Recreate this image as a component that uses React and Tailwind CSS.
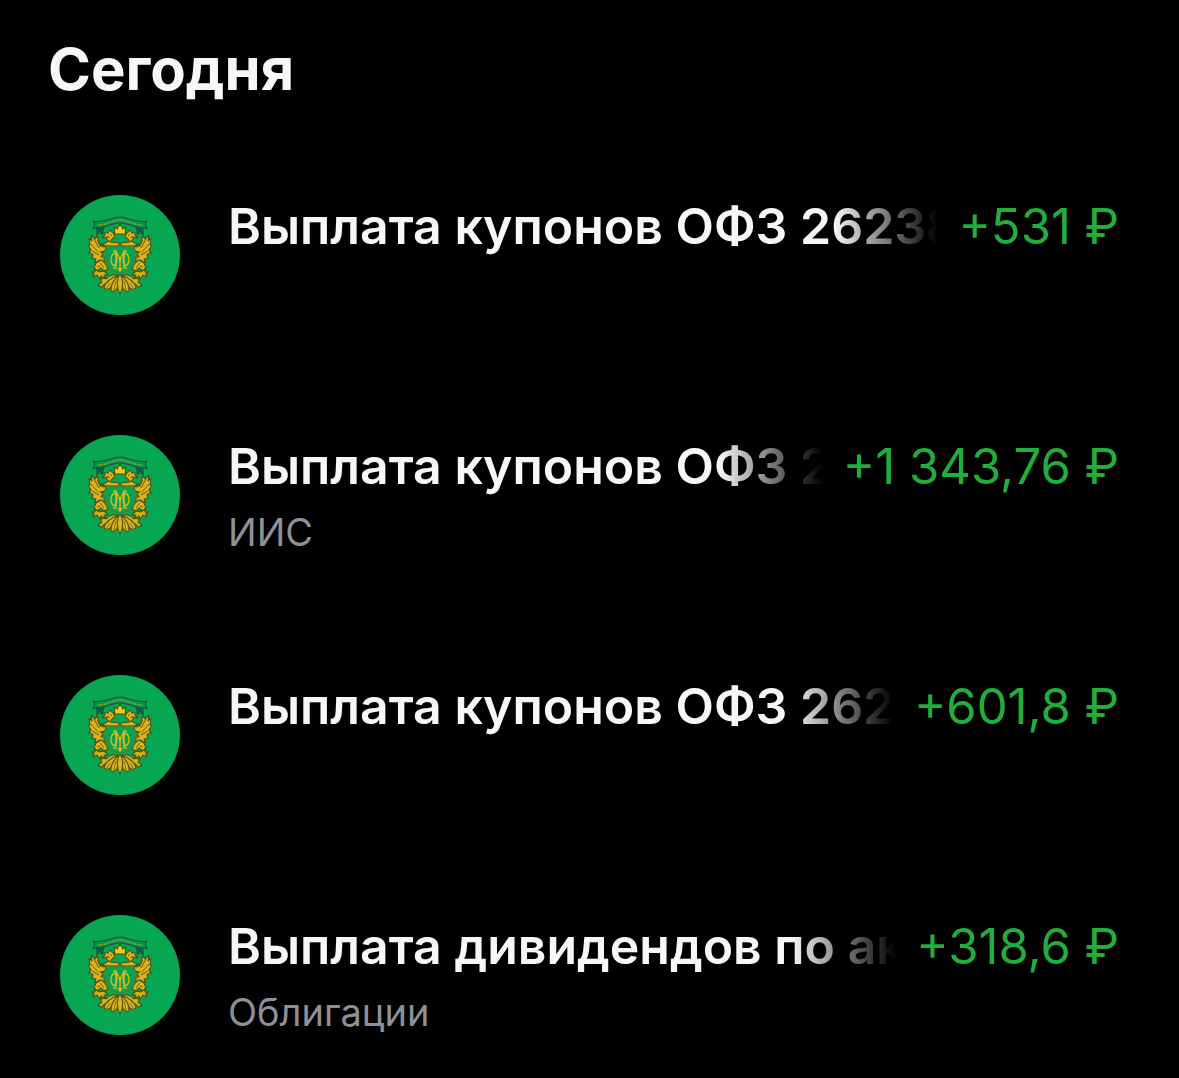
const operations = [
  { id: 1, title: 'Выплата купонов ОФЗ 26238', amount: '+531 ₽' },
  { id: 2, title: 'Выплата купонов ОФЗ 26238', account: 'ИИС', amount: '+1 343,76 ₽' },
  { id: 3, title: 'Выплата купонов ОФЗ 26238', amount: '+601,8 ₽' },
  { id: 4, title: 'Выплата дивидендов по акциям', account: 'Облигации', amount: '+318,6 ₽' },
];

// Left half of the eagle, mirrored for the right one
const EagleHalf = () => (
  <g>
    {/* wing */}
    <path d="M46 52 C42 52 39 50 39 46 L37 41 L35 44 L31 40 L32 46 L29 43 L30 50 L28 50 L31 55 L29 57 L33 60 L32 63 L36 64 L35 68 L40 65 L39 69 L44 67 L44 62 L41 62 L43 58 L40 57 L45 56 Z" />
    <path d="M34 44 L39 53 M31 49 L38 57 M32 56 L39 60 M37 45 L41 52" fill="none" strokeWidth="0.9" />
    {/* head, beak and the scroll above the shield */}
    <path d="M59 51 H46 L42 49 C45 49 46 47 49 46 C47 45 46 43 47 42 L42 43 L45 40 L43 38 L48 38 L50 35 L53 38 C56 40 54 43 52 44 L50 47 L59 48 Z" />
    <path d="M50 39 L52 41 M47 42 L50 42" fill="none" strokeWidth="0.8" />
    {/* mantling */}
    <path d="M36 68 L41 65 L45 68 L48 74 L44 76 L41 73 L37 76 L34 73 Z" />
    <path d="M40 68 L44 73 M37 72 L40 71" fill="none" strokeWidth="0.8" />
    {/* claw */}
    <path d="M32 77 L35 77 L35 74 L39 77 L44 76 L48 80 L44 80 L46 84 L41 81 L40 84 L37 80 L33 82 L34 79 Z" />
    {/* tail feathers */}
    <path d="M58 80 C53 79 49 81 46 84 C43 82 39 85 42 87 L38 90 C43 94 45 89 50 85 Z" />
    <path d="M58 80 C51 83 45 88 44 93 C49 97 52 91 53 88 Z" />
    <path d="M59 80 C54 84 50 91 51 96 C57 98 58 91 59 86 Z" />
    <path d="M46 88 L42 90 M50 88 L47 93 M56 86 L54 95" fill="none" strokeWidth="0.7" />
  </g>
);

const Emblem = () => (
  <svg viewBox="0 0 120 120" className="size-[120px] shrink-0" aria-hidden="true">
    <circle cx="60" cy="60" r="60" fill="#06a653" />

    {/* ribbon */}
    <g stroke="#0f5a38" strokeWidth="1.2" strokeLinejoin="round">
      <path d="M37 33 L37 40 L40 36 L42 39 L44 33 Z M83 33 L83 40 L80 36 L78 39 L76 33 Z" fill="#0b6849" />
      <path d="M33 26 C43 29 52 22 60 22 C68 22 77 29 87 26 L85 29 L87 33 C77 34 68 28 60 28 C52 28 43 34 33 33 L35 29 Z" fill="#11934f" />
    </g>
    <path d="M38 30 C46 30 53 25 60 25 C67 25 74 30 82 30" fill="none" stroke="#6fae4b" strokeWidth="1.4" strokeDasharray="1.4 0.6" />

    <g fill="#e0b31c" stroke="#4c5014" strokeWidth="1.1" strokeLinejoin="round">
      <EagleHalf />
      <g transform="translate(120 0) scale(-1 1)">
        <EagleHalf />
      </g>
      <path d="M60 79 C57 83 56 92 60 99 C64 92 63 83 60 79 Z" />
      <path d="M55 39 L54 32 L57 34 L60 29 L63 34 L66 32 L65 39 Z" fill="#f6c71b" />
    </g>

    {/* shield */}
    <path d="M46 51 H74 V66 C74 73 70 76 60 79 C50 76 46 73 46 66 Z" fill="#08a352" stroke="#667a1c" strokeWidth="1" />
    <g fill="none" stroke="#dcb71f" strokeWidth="1.4" strokeLinejoin="round">
      <path d="M53 73 H56 V56 L60 65 L64 56 V73 H67 M53 56 H56 M64 56 H67" />
      <path d="M60 65 V75 M58 73 L60 76 L62 73" />
      <path d="M54 58 C50 61 50 68 54 71 C58 68 58 61 54 58 Z M66 58 C62 61 62 68 66 71 C70 68 70 61 66 58 Z" strokeWidth="1.2" />
    </g>
  </svg>
);

const OperationRow = ({ operation }) => (
  <li className="flex min-h-60 items-start gap-12 last:min-h-0">
    <Emblem />
    <div className="min-w-0 flex-1">
      <div className="flex items-baseline gap-5">
        <h2 className="min-w-0 flex-1 overflow-hidden whitespace-nowrap text-[50px] leading-[62px] font-semibold text-[#f7f7f7] mask-r-from-[calc(100%-104px)] mask-r-to-100%">
          {operation.title}
        </h2>
        <p className="shrink-0 whitespace-nowrap text-[49px] leading-[62px] text-[#20ae3c]">
          {operation.amount}
        </p>
      </div>
      {operation.account && (
        <p className="text-[38px] leading-[68px] text-[#8f8f96]">{operation.account}</p>
      )}
    </div>
  </li>
);

export default function App() {
  return (
    <main className="min-h-screen bg-black font-['Inter','Liberation_Sans',sans-serif]">
      <h1 className="px-12 pt-8 text-[58px] leading-[74px] font-bold text-[#f7f7f7]">Сегодня</h1>
      <ul className="px-[60px] pt-[89px]">
        {operations.map((operation) => (
          <OperationRow key={operation.id} operation={operation} />
        ))}
      </ul>
    </main>
  );
}
